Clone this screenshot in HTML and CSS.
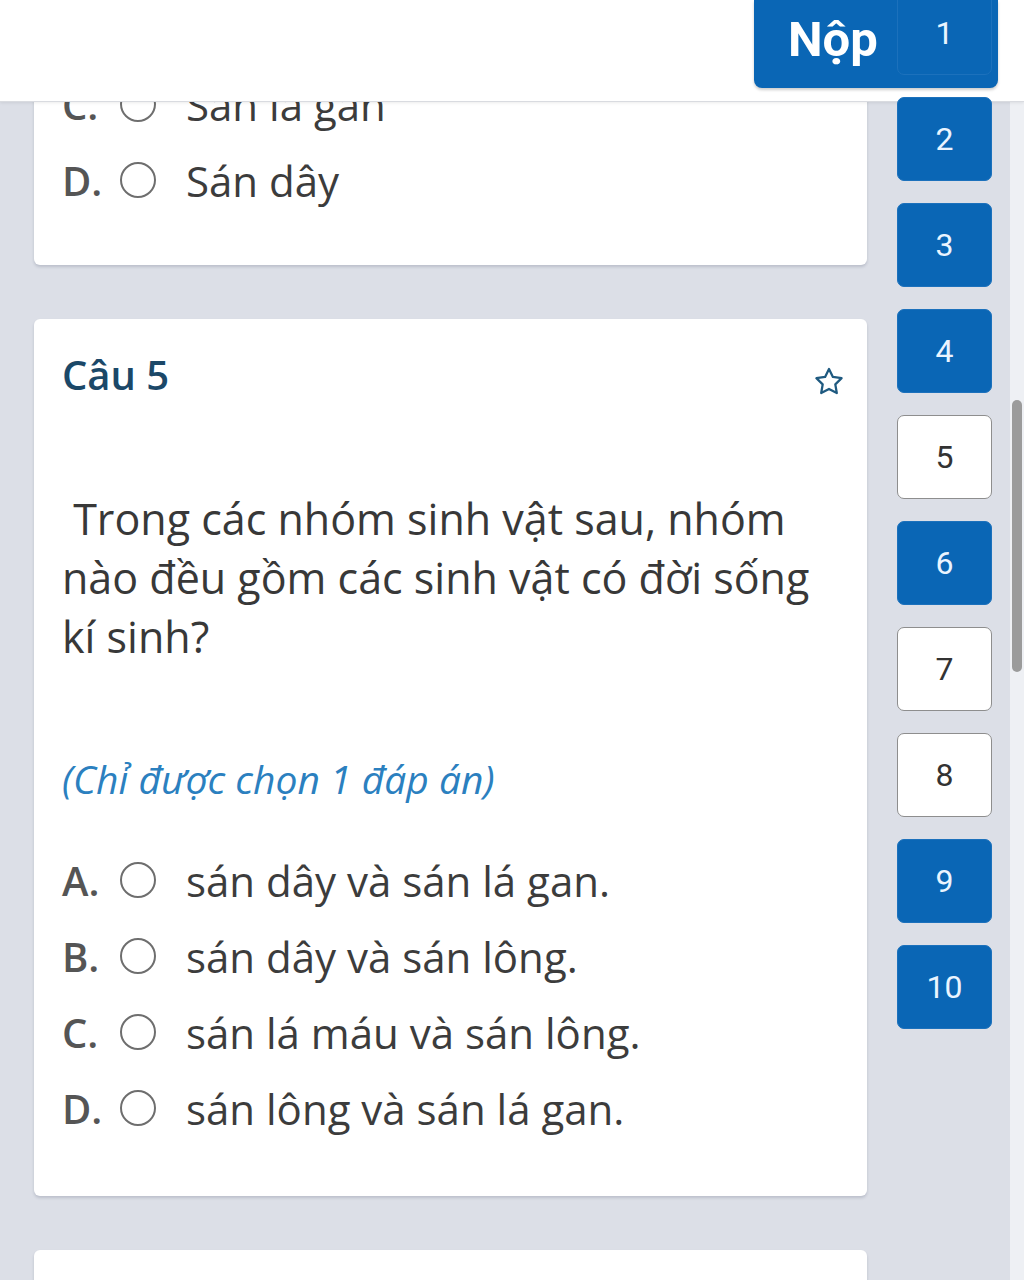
FILE: index.html
```html
<!DOCTYPE html>
<html lang="vi">
<head>
<meta charset="utf-8">
<title>Bài kiểm tra</title>
<link rel="stylesheet" href="styles.css">
</head>
<body>
<header class="topbar">
  <div class="submit">Nộp</div>
</header>
<div class="page">
  <main class="questions">
    <section class="card card-prev">
      <div class="option"><span class="letter">C.</span><span class="radio"></span><span class="opt-text">Sán lá gan</span></div>
      <div class="option"><span class="letter">D.</span><span class="radio"></span><span class="opt-text">Sán dây</span></div>
    </section>
    <section class="card card-main">
      <div class="title-row">
        <h2 class="title">Câu 5</h2>
        <svg class="star" viewBox="0 0 24 24" width="34" height="34" aria-hidden="true">
          <path d="M12 2.8l2.75 5.6 6.15.9-4.45 4.35 1.05 6.13L12 16.9l-5.5 2.88 1.050-6.13L3.1 9.3l6.15-.9z" fill="none" stroke="#1f5a80" stroke-width="1.6" stroke-linejoin="round"/>
        </svg>
      </div>
      <p class="question">&nbsp;Trong các nhóm sinh vật sau, nhóm nào đều gồm các sinh vật có đời sống kí sinh?</p>
      <p class="note">(Chỉ được chọn 1 đáp án)</p>
      <div class="options">
        <div class="option"><span class="letter">A.</span><span class="radio"></span><span class="opt-text">sán dây và sán lá gan.</span></div>
        <div class="option"><span class="letter">B.</span><span class="radio"></span><span class="opt-text">sán dây và sán lông.</span></div>
        <div class="option"><span class="letter">C.</span><span class="radio"></span><span class="opt-text">sán lá máu và sán lông.</span></div>
        <div class="option"><span class="letter">D.</span><span class="radio"></span><span class="opt-text">sán lông và sán lá gan.</span></div>
      </div>
    </section>
    <section class="card card-next"></section>
  </main>
  <nav class="navigator">
    <div class="num done">1</div>
    <div class="num done">2</div>
    <div class="num done">3</div>
    <div class="num done">4</div>
    <div class="num">5</div>
    <div class="num done">6</div>
    <div class="num">7</div>
    <div class="num">8</div>
    <div class="num done">9</div>
    <div class="num done">10</div>
  </nav>
  <div class="scroll-track"></div>
</div>
<div class="scroll-thumb"></div>
</body>
</html>
```

FILE: styles.css
```css
html, body {
  margin: 0;
  padding: 0;
}
body {
  background: #dcdfe7;
  font-family: "Open Sans", "Noto Sans", sans-serif;
  width: 1024px;
  height: 1280px;
  overflow: hidden;
  position: relative;
}
.topbar {
  position: absolute;
  top: 0;
  left: 0;
  width: 1024px;
  height: 101px;
  background: #ffffff;
  border-bottom: 1px solid #d9dbe0;
  box-shadow: 0 1px 3px rgba(0, 0, 0, 0.08);
  z-index: 1;
}
.submit {
  position: absolute;
  left: 754px;
  top: 0;
  width: 244px;
  height: 88px;
  box-sizing: border-box;
  padding-left: 34px;
  background: #0a66b5;
  border-radius: 0 0 8px 8px;
  box-shadow: 0 2px 3px rgba(0, 0, 0, 0.2);
  color: #ffffff;
  font-family: Roboto, "Liberation Sans", sans-serif;
  font-weight: 700;
  font-size: 49px;
  line-height: 80px;
}
.page {
  display: flex;
  align-items: flex-start;
}
.questions {
  width: 833px;
  margin-left: 34px;
  display: flex;
  flex-direction: column;
  gap: 54px;
}
.card {
  background: #ffffff;
  border-radius: 6px;
  box-shadow: 0 2px 3px rgba(40, 50, 80, 0.18);
  padding: 0 24px 0 28px;
}
.card-prev {
  padding-top: 66px;
  padding-bottom: 47px;
}
.card-main {
  padding-top: 28px;
  padding-bottom: 50px;
}
.card-next {
  height: 200px;
}
.title-row {
  display: flex;
  justify-content: space-between;
  align-items: flex-start;
}
.title {
  margin: 0;
  font-size: 40px;
  font-weight: 600;
  line-height: 56px;
  color: #1b4868;
}
.star {
  margin-top: 18px;
  margin-right: -3px;
  display: block;
}
.question {
  margin: 86px 0 0 0;
  padding-right: 24px;
  font-size: 43px;
  line-height: 59px;
  color: #383838;
}
.note {
  margin: 88px 0 0 0;
  font-size: 39px;
  line-height: 50px;
  font-style: italic;
  color: #2b80bf;
}
.options {
  margin-top: 38px;
}
.option {
  display: flex;
  align-items: center;
  height: 76px;
  font-size: 42px;
  color: #3c3c3c;
}
.letter {
  width: 58px;
  font-size: 40px;
  font-weight: 600;
  color: #555555;
}
.radio {
  width: 36px;
  height: 36px;
  box-sizing: border-box;
  border: 2px solid #6e6e6e;
  border-radius: 50%;
  margin-right: 30px;
  flex-shrink: 0;
}
.navigator {
  position: relative;
  z-index: 2;
  margin-top: -9px;
  margin-left: 30px;
  display: flex;
  flex-direction: column;
  gap: 22px;
}
.num {
  width: 95px;
  height: 84px;
  box-sizing: border-box;
  border-radius: 7px;
  border: 1.5px solid #8e8e8e;
  background: #ffffff;
  color: #333333;
  font-family: Roboto, "Liberation Sans", sans-serif;
  font-size: 32px;
  display: flex;
  align-items: center;
  justify-content: center;
}
.num.done {
  background: #0a66b5;
  border-color: #1c71bc;
  color: #eaf4ff;
}
.scroll-track {
  margin-left: auto;
  width: 14px;
  height: 1280px;
  background: #eef0f4;
}
.scroll-thumb {
  position: absolute;
  left: 1012px;
  top: 400px;
  width: 10px;
  height: 272px;
  border-radius: 5px;
  background: #9b9b9b;
  z-index: 3;
}
```
